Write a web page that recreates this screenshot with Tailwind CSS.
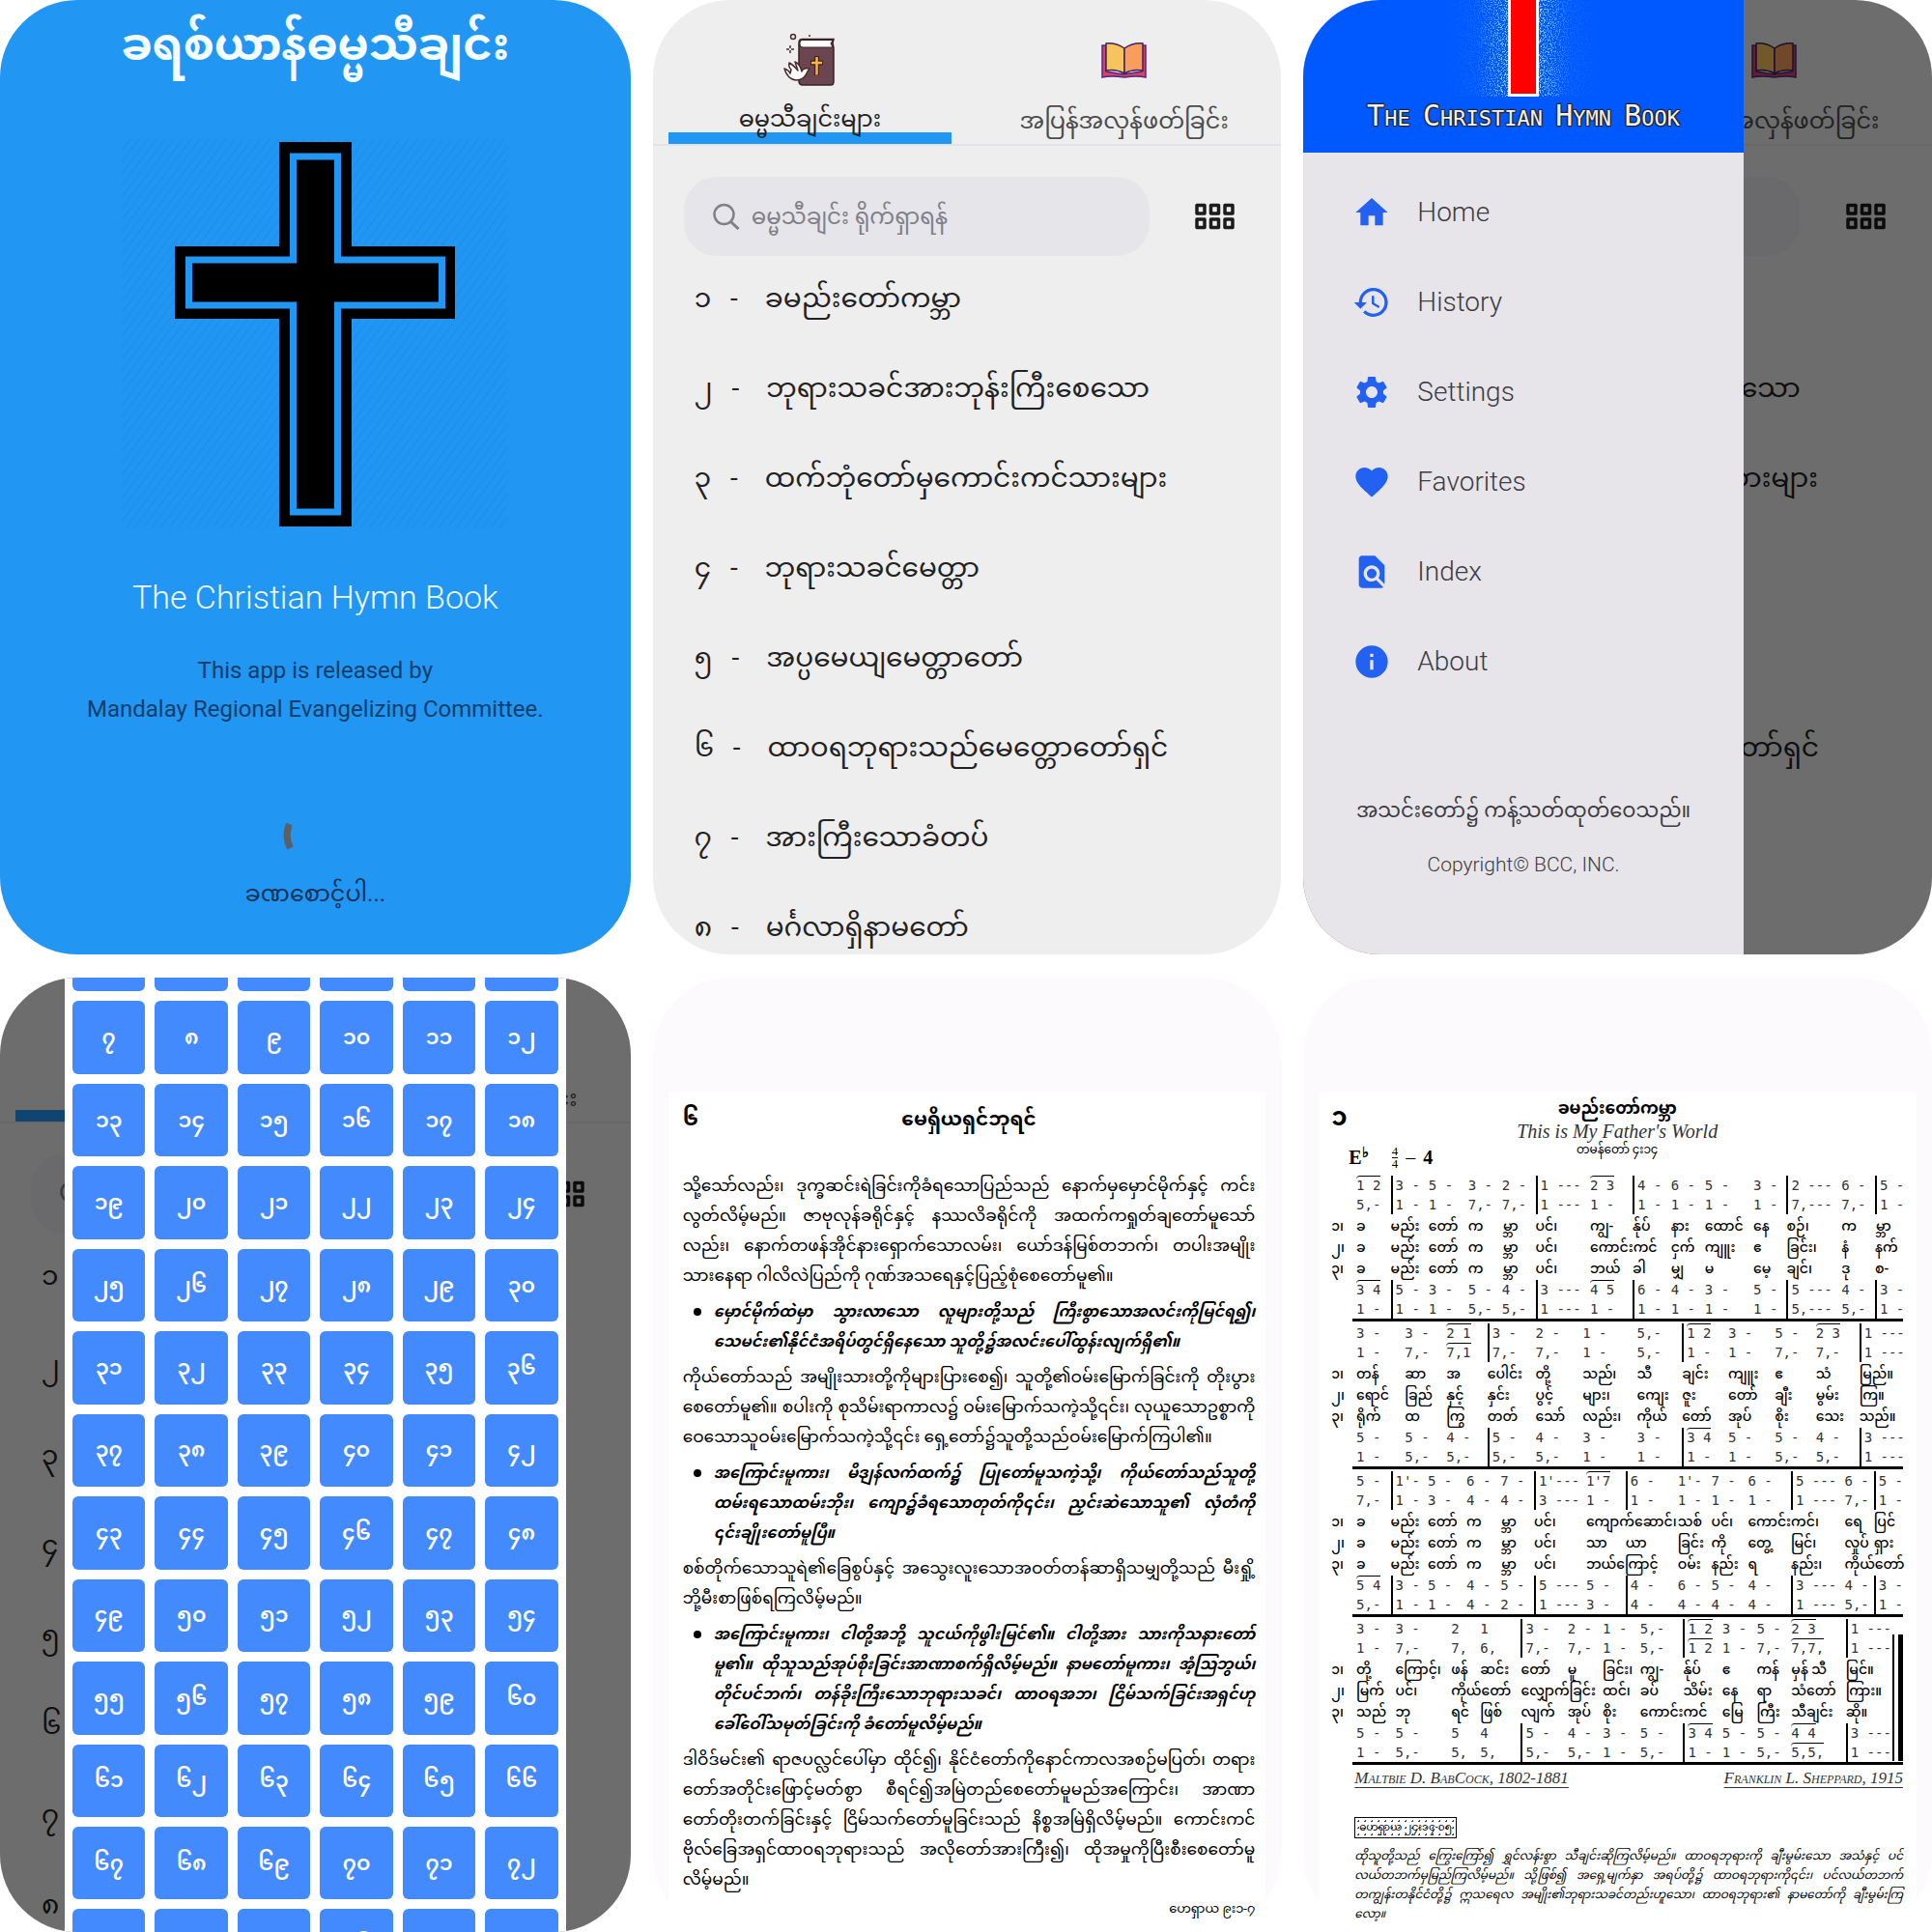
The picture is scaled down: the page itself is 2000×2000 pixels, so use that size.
<!DOCTYPE html>
<html lang="my">
<head>
<meta charset="utf-8">
<meta name="viewport" content="width=device-width, initial-scale=1">
<title>The Christian Hymn Book</title>
<script src="https://cdn.jsdelivr.net/npm/@tailwindcss/browser@4"></script>
</head>
<body class="bg-white font-['Roboto','Noto_Sans_Myanmar','Padauk','Myanmar_Text',sans-serif]">
<main class="grid min-h-screen grid-cols-[653fr_651fr_651fr] grid-rows-2 gap-x-[23px] gap-y-6">

  <!-- Splash -->
  <section class="flex flex-col items-center overflow-hidden rounded-[80px] bg-[#2196f3] text-center">
    <h1 class="mt-1.5 mb-0.5 text-[46px] leading-[80px] font-bold whitespace-nowrap text-[#f4fdff]">ခရစ်ယာန်ဓမ္မသီချင်း</h1>
    <svg class="mt-14 h-[402px] w-[400px]" viewBox="0 0 400 402" role="img" aria-label="Cross">
      <defs><pattern id="hatch" width="9" height="12" patternUnits="userSpaceOnUse"><path d="M-2 14.700L11 -2.700M-6.500 8.700L2 -2.700M7 14.700L15.500 3.300" stroke="#1b8ae4" stroke-opacity=".35" stroke-width="2"/></pattern></defs>
      <rect width="400" height="402" fill="url(#hatch)"/>
      <path d="M163 3h75v108h107v75H238v215H163V186H55V111h108z" fill="#000"/>
      <path d="M177.500 18h46v107h108v47h-108v214h-46v-214h-108v-47h108z" fill="#000" stroke="#2196f3" stroke-width="7"/>
    </svg>
    <p class="mt-12 text-[34px] leading-[48px] font-light whitespace-nowrap text-[#f0faff]">The Christian Hymn Book</p>
    <p class="mt-8 text-[24px] leading-10 text-[#123e6c]">This app is released by<br>Mandalay Regional Evangelizing Committee.</p>
    <svg class="mt-[77px] h-[70px] w-[70px]" viewBox="0 0 70 70" fill="none" role="img" aria-label="Loading"><path d="M8.500 22A30 30 0 0 0 9.500 47" stroke="#5b6066" stroke-width="7"/></svg>
    <p class="text-[24px] leading-[48px] text-[#0f3155]">ခဏစောင့်ပါ...</p>
  </section>

  <!-- Hymn list -->
  <section id="home" class="relative overflow-hidden rounded-[80px] bg-[#eeeeee] text-[#222]">
    <div class="absolute inset-0 overflow-hidden">
      <nav class="grid h-[151px] grid-cols-2 border-b-2 border-[#e3e3e7]">
        <button class="relative mx-4 flex flex-col items-center pt-[34px]">
          <svg class="h-[55px] w-[54px]" viewBox="0 0 54 55">
            <circle cx="10" cy="4" r="2.500" fill="none" stroke="#4a2a30" stroke-width="1.500"/><circle cx="27" cy="3" r="1" fill="#4a2a30"/>
            <path d="M7 13v8M3 17h8" stroke="#4a2a30" stroke-width="1.500" stroke-dasharray="3 2"/>
            <path d="M16 10q0-3.500 4-3.500h32l-1 4 1 5v35q0 3.500-3 3.500H20q-4 0-4-4z" fill="#6b4550" stroke="#3c2024" stroke-width="1.500"/>
            <path d="M17 10q0-2.500 3-2.500h31l-2 3.500 2 4H20q-3 0-3-3z" fill="#fff" stroke="#3c2024" stroke-width="1"/>
            <path d="M34.500 24v20M28 31h13" stroke="#3c2024" stroke-width="5"/><path d="M34.500 25v18.500M29 31h11" stroke="#f6b649" stroke-width="2.500"/>
            <path d="M1 37q5 2 6 5l1-4q-3-3-2-7 4 2 9 8l-3-9q5 2 7 10 1-4 8-3l-2 3q-3 9-12 9-9-1-12-12z" fill="#fff" stroke="#4a2a30" stroke-width="1.500" stroke-linejoin="round"/>
          </svg>
          <span class="absolute inset-x-0 bottom-0 h-3 bg-[#2196f3]"></span>
          <span data-under="drawer picker" class="relative mt-[14px] text-[24px] leading-10 whitespace-nowrap">ဓမ္မသီချင်းများ</span>
        </button>
        <button class="mx-4 flex flex-col items-center pt-[34px] text-[#4c4c4c]">
          <svg class="h-[55px] w-[54px]" viewBox="0 0 54 55">
            <path d="M4 13h4v27l18 3 19-3V13h4v33q-9-2-22 0-14-2-23 0z" fill="#e0405f" stroke="#4b2a8c" stroke-width="1.500"/>
            <path d="M8 11q10-1 19 5v26q-9-5-19-3z" fill="#f7c35c" stroke="#3b2360" stroke-width="1.500"/>
            <path d="M46 11q-10-1-19 5v26q9-5 19-3z" fill="#f99d5c" stroke="#3b2360" stroke-width="1.500"/>
          </svg>
          <span class="mt-4 text-[24px] leading-10 whitespace-nowrap">အပြန်အလှန်ဖတ်ခြင်း</span>
        </button>
      </nav>
      <div class="mr-12 ml-8 flex items-center justify-between pt-8">
        <label class="flex h-[82px] w-[482px] items-center gap-3 rounded-[34px] bg-[#e6e5ea] pl-[30px]">
          <svg class="h-7 w-7 shrink-0" viewBox="0 0 28 28" fill="none" stroke="#808086" stroke-width="2.500" role="img" aria-label="Search"><circle cx="11.500" cy="12" r="10"/><path d="M18.500 19.500l8 7.500" stroke-width="3"/></svg>
          <input data-under="drawer picker" type="search" class="h-14 w-80 bg-transparent text-[23px] outline-none placeholder:text-[#808086]" placeholder="ဓမ္မသီချင်း ရိုက်ရှာရန်">
        </label>
        <button aria-label="Number grid"><svg class="h-7 w-[41px]" viewBox="0 0 41 28" fill="none" stroke="#1c1c1c" stroke-width="3.500"><path d="M2 2.500h8v8.500h-8zM16.500 2.500h8v8.500h-8zM31 2.500h8v8.500h-8zM2 17h8v8.500h-8zM16.500 17h8v8.500h-8zM31 17h8v8.500h-8z" stroke-linejoin="round"/></svg></button>
      </div>
      <ol class="-mt-[3px] pl-[43px] text-[28px] leading-[93px]">
        <li class="flex gap-5 whitespace-nowrap"><span data-under="drawer">၁</span><span data-under="drawer picker">-</span><span data-under="drawer picker" class="ml-2">ခမည်းတော်ကမ္ဘာ</span></li>
        <li class="flex gap-5 whitespace-nowrap"><span data-under="drawer">၂</span><span data-under="drawer picker">-</span><span data-under="picker" class="ml-2">ဘုရားသခင်အားဘုန်းကြီးစေသော</span></li>
        <li class="flex gap-5 whitespace-nowrap"><span data-under="drawer">၃</span><span data-under="drawer picker">-</span><span data-under="picker" class="ml-2">ထက်ဘုံတော်မှကောင်းကင်သားများ</span></li>
        <li class="flex gap-5 whitespace-nowrap"><span data-under="drawer">၄</span><span data-under="drawer picker">-</span><span data-under="drawer picker" class="ml-2">ဘုရားသခင်မေတ္တာ</span></li>
        <li class="flex gap-5 whitespace-nowrap"><span data-under="drawer">၅</span><span data-under="drawer picker">-</span><span data-under="drawer picker" class="ml-2">အပ္ပမေယျမေတ္တာတော်</span></li>
        <li class="flex gap-5 whitespace-nowrap"><span data-under="drawer">၆</span><span data-under="drawer picker">-</span><span data-under="picker" class="ml-2">ထာဝရဘုရားသည်မေတ္တောတော်ရှင်</span></li>
        <li class="flex gap-5 whitespace-nowrap"><span data-under="drawer">၇</span><span data-under="drawer picker">-</span><span data-under="drawer picker" class="ml-2">အားကြီးသောခံတပ်</span></li>
        <li class="flex gap-5 whitespace-nowrap"><span data-under="drawer">၈</span><span data-under="drawer picker">-</span><span data-under="drawer picker" class="ml-2">မင်္ဂလာရှိနာမတော်</span></li>
      </ol>
    </div>
  </section>

  <!-- Drawer -->
  <section class="relative overflow-hidden rounded-[80px] bg-[#eeeeee]">
    <div data-home="drawer" class="absolute inset-0 overflow-hidden text-[#222]" inert></div>
    <div class="absolute inset-0 bg-black/54"></div>
    <aside class="absolute inset-y-0 left-0 flex w-[70%] flex-col items-center bg-[#e7e5ea] text-[#3c3c42]">
      <header class="relative flex h-[158px] w-full flex-col items-center bg-[#0059ff]">
        <svg class="h-[100px] w-40" viewBox="0 0 160 100">
          <defs>
            <filter id="speck" x="0" y="0" width="1" height="1"><feTurbulence type="fractalNoise" baseFrequency=".75" numOctaves="2" seed="4"/><feColorMatrix values="0 0 0 0 .35  0 0 0 0 .72  0 0 0 0 .75  9 0 0 0 -4.600"/></filter>
            <linearGradient id="fade"><stop offset="0" stop-color="#000"/><stop offset=".2" stop-color="#222"/><stop offset=".42" stop-color="#fff"/><stop offset=".58" stop-color="#fff"/><stop offset=".8" stop-color="#222"/><stop offset="1" stop-color="#000"/></linearGradient>
            <mask id="glow"><rect width="160" height="100" fill="url(#fade)"/></mask>
          </defs>
          <g mask="url(#glow)"><rect width="160" height="100" filter="url(#speck)"/></g>
          <rect x="64" y="-4" width="32" height="104" fill="#fff"/><rect x="67" y="-4" width="26" height="101" fill="#f00"/>
        </svg>
        <p class="font-['DejaVu_Sans_Mono',monospace] text-[22px] leading-10 whitespace-nowrap text-[#f4f1ee] uppercase [text-shadow:1px_1px_1px_#222,-1px_-1px_1px_#222,1px_-1px_1px_#222,-1px_1px_1px_#222]"><span class="text-[30px]">T</span>he <span class="text-[30px]">C</span>hristian <span class="text-[30px]">H</span>ymn <span class="text-[30px]">B</span>ook</p>
      </header>
      <nav class="flex w-full flex-col pt-[15px] pl-[51px] text-[28px] leading-[93px] font-light">
        <a href="#" class="flex items-center gap-[27px]"><svg class="size-10 fill-[#2361f2]" viewBox="0 0 24 24"><path d="M10 20v-6h4v6h5v-8h3L12 3 2 12h3v8z"/></svg>Home</a>
        <a href="#" class="flex items-center gap-[27px]"><svg class="size-10 fill-[#2361f2]" viewBox="0 0 24 24"><path d="M13 3a9 9 0 0 0-9 9H1l3.890 3.890.070.140L9 12H6c0-3.870 3.130-7 7-7s7 3.130 7 7-3.130 7-7 7c-1.930 0-3.680-.79-4.940-2.060l-1.420 1.420A8.954 8.954 0 0 0 13 21a9 9 0 0 0 0-18zm-1 5v5l4.280 2.540.72-1.210-3.500-2.080V8z"/></svg>History</a>
        <a href="#" class="flex items-center gap-[27px]"><svg class="size-10 fill-[#2361f2]" viewBox="0 0 24 24"><path d="M19.140 12.940c.04-.3.060-.61.060-.94s-.02-.64-.07-.94l2.030-1.580a.49.49 0 0 0 .12-.61l-1.920-3.320a.488.488 0 0 0-.59-.22l-2.390.96c-.5-.38-1.030-.7-1.620-.94l-.36-2.540a.484.484 0 0 0-.48-.41h-3.840c-.24 0-.43.170-.47.410l-.36 2.540c-.59.240-1.130.570-1.620.940l-2.390-.96c-.22-.08-.47 0-.59.220L2.740 8.870c-.12.210-.08.470.120.610l2.030 1.580c-.05.300-.09.630-.09.940s.02.640.070.940l-2.030 1.580a.49.49 0 0 0-.12.610l1.920 3.320c.12.220.37.290.59.220l2.390-.96c.5.380 1.030.7 1.620.94l.36 2.540c.05.240.24.410.48.410h3.840c.24 0 .44-.17.470-.41l.36-2.540c.59-.24 1.130-.56 1.620-.94l2.390.96c.22.080.47 0 .59-.22l1.920-3.320c.12-.22.070-.47-.12-.61zM12 15.600c-1.980 0-3.600-1.620-3.600-3.600s1.620-3.600 3.600-3.600 3.600 1.620 3.600 3.600-1.620 3.600-3.600 3.600z"/></svg>Settings</a>
        <a href="#" class="flex items-center gap-[27px]"><svg class="size-10 fill-[#2361f2]" viewBox="0 0 24 24"><path d="M12 21.350l-1.450-1.320C5.400 15.360 2 12.280 2 8.500 2 5.420 4.420 3 7.500 3c1.740 0 3.410.81 4.500 2.090C13.090 3.810 14.760 3 16.500 3 19.580 3 22 5.420 22 8.500c0 3.780-3.400 6.860-8.550 11.540z"/></svg>Favorites</a>
        <a href="#" class="flex items-center gap-[27px]"><svg class="size-10 fill-[#2361f2]" viewBox="0 0 24 24"><path d="M20 19.590V8l-6-6H6c-1.100 0-1.990.9-1.990 2L4 20c0 1.100.89 2 1.990 2H18c.45 0 .85-.15 1.190-.4l-4.430-4.430c-.8.520-1.740.83-2.760.83-2.760 0-5-2.240-5-5s2.240-5 5-5 5 2.240 5 5c0 1.020-.31 1.960-.83 2.750zM9 13c0 1.660 1.340 3 3 3s3-1.340 3-3-1.340-3-3-3-3 1.340-3 3z"/></svg>Index</a>
        <a href="#" class="flex items-center gap-[27px]"><svg class="size-10 fill-[#2361f2]" viewBox="0 0 24 24"><path d="M12 2a10 10 0 1 0 0 20 10 10 0 0 0 0-20zm1 15h-2v-6h2zm0-8h-2V7h2z"/></svg>About</a>
      </nav>
      <p class="mt-[78px] text-[21px] leading-[60px] whitespace-nowrap">အသင်းတော်၌ ကန့်သတ်ထုတ်ဝေသည်။</p>
      <p class="text-[21px] leading-[52px] font-light">Copyright© BCC, INC.</p>
    </aside>
  </section>

  <!-- Number picker -->
  <section class="relative overflow-hidden rounded-[80px] bg-[#eeeeee]">
    <div data-home="picker" class="absolute inset-0 overflow-hidden text-[#222]" inert></div>
    <div class="absolute inset-0 bg-black/54"></div>
    <div role="dialog" aria-label="Hymn numbers" class="absolute inset-y-0 right-[67px] left-[67px] overflow-hidden bg-white px-2">
      <div id="numbers" class="-mt-[61px] grid grid-cols-6 gap-[10px]"></div>
    </div>
  </section>

  <!-- Responsive reading -->
  <section class="flex flex-col overflow-hidden rounded-[80px] bg-[#fdfafe] px-4 pt-[118px] text-black">
    <article class="flex-1 bg-white pr-[11px] pl-[15px] text-[17px] leading-[31px]">
      <header class="grid grid-cols-[1fr_auto_1fr] text-[20px] leading-[56px] font-bold"><span class="text-[22px]">၆</span><h2>မေရှိယရှင်ဘုရင်</h2></header>
      <div id="reading" class="mt-[26px] flex flex-col gap-[6px]"></div>
      <p class="text-right text-[13px] leading-[30px]">ဟေရှာယ ၉း၁-၇</p>
    </article>
  </section>

  <!-- Hymn sheet -->
  <section class="flex flex-col overflow-hidden rounded-[80px] bg-[#fdfafe] px-4 pt-[118px] text-black">
    <article class="flex-1 bg-white pr-[14px] pl-[13px]">
      <header class="grid grid-cols-[1fr_auto_1fr]">
        <span class="text-[26px] leading-[52px] font-bold">၁</span>
        <div class="text-center">
          <h2 class="text-[17px] leading-[34px] font-bold">ခမည်းတော်ကမ္ဘာ</h2>
          <p class="font-['Liberation_Serif',serif] text-[20px] leading-[14px] text-[#333] italic">This is My Father's World</p>
          <p class="text-[12px] leading-6">တမန်တော် ၄း၁၄</p>
        </div>
      </header>
      <div class="-mt-[22px] flex h-9 items-center pl-[18px] font-['Liberation_Serif',serif] text-[20px]">
        <b>E<sup>♭</sup></b>
        <span class="mr-2 ml-6 flex flex-col text-[13px] leading-3"><span class="border-b border-black">4</span><span>4</span></span>– <b class="ml-2">4</b>
      </div>
      <div id="score" class="mt-px flex flex-col gap-[2px]"></div>
      <div class="flex justify-between pl-6 font-['Liberation_Serif',serif] text-[17px] leading-7 text-[#333] italic underline underline-offset-4 [font-variant-caps:small-caps]"><span>Maltbie D. BabCock, 1802-1881</span><span>Franklin L. Sheppard, 1915</span></div>
      <p class="mt-[26px] ml-6 w-fit border border-black bg-[radial-gradient(#444_1px,transparent_1px)] bg-size-[7px_7px] px-1 text-[11px] leading-5">ဟေရှာယ ၂၄း၁၄-၁၅</p>
      <div id="verse" class="mt-2 ml-6 text-[12px] leading-5 italic"></div>
    </article>
  </section>
</main>

<script>
  const digits = n => String(n).replace(/\d/g, d => '၀၁၂၃၄၅၆၇၈၉'[d]);
  // The first row is scrolled almost out of sight, so it carries its number as a label only.
  document.getElementById('numbers').innerHTML = Array.from({ length: 78 }, (_, i) =>
    `<button aria-label="${digits(i + 1)}" class="aspect-square rounded-md bg-[#448aff] text-[22px] leading-none font-semibold text-white">${i < 6 ? '' : digits(i + 1)}</button>`).join('');

  // Full lines are justified; the last line of each block is not.
  const lines = a => a.map((t, i) => `<span class="block whitespace-nowrap ${i < a.length - 1 ? '[text-align-last:justify]' : ''}">${t}</span>`).join('');
  const reading = [
    [0, ['သို့သော်လည်း၊ ဒုက္ခဆင်းရဲခြင်းကိုခံရသောပြည်သည် နောက်မှမှောင်မိုက်နှင့် ကင်း', 'လွတ်လိမ့်မည်။ ဇာဗုလုန်ခရိုင်နှင့် နဿလိခရိုင်ကို အထက်ကရှုတ်ချတော်မူသော်', 'လည်း၊ နောက်တဖန်အိုင်နားရှောက်သောလမ်း၊ ယော်ဒန်မြစ်တဘက်၊ တပါးအမျိုး', 'သားနေရာ ဂါလိလဲပြည်ကို ဂုဏ်အသရေနှင့်ပြည့်စုံစေတော်မူ၏။']],
    [1, ['မှောင်မိုက်ထဲမှာ သွားလာသော လူများတို့သည် ကြီးစွာသောအလင်းကိုမြင်ရ၍၊', 'သေမင်း၏နိုင်ငံအရိပ်တွင်ရှိနေသော သူတို့၌အလင်းပေါ်ထွန်းလျက်ရှိ၏။']],
    [0, ['ကိုယ်တော်သည် အမျိုးသားတို့ကိုများပြားစေ၍၊ သူတို့၏ဝမ်းမြောက်ခြင်းကို တိုးပွား', 'စေတော်မူ၏။ စပါးကို စုသိမ်းရာကာလ၌ ဝမ်းမြောက်သကဲ့သို့၎င်း၊ လုယူသောဥစ္စာကို', 'ဝေသောသူဝမ်းမြောက်သကဲ့သို့၎င်း ရှေ့တော်၌သူတို့သည်ဝမ်းမြောက်ကြပါ၏။']],
    [1, ['အကြောင်းမူကား၊ မိဒျန်လက်ထက်၌ ပြုတော်မူသကဲ့သို့၊ ကိုယ်တော်သည်သူတို့', 'ထမ်းရသောထမ်းဘိုး၊ ကျော၌ခံရသောတုတ်ကို၎င်း၊ ညှင်းဆဲသောသူ၏ လှံတံကို', '၎င်းချိုးတော်မူပြီ။']],
    [0, ['စစ်တိုက်သောသူရဲ၏ခြေစွပ်နှင့် အသွေးလူးသောအဝတ်တန်ဆာရှိသမျှတို့သည် မီးရှို့', 'ဘို့မီးစာဖြစ်ရကြလိမ့်မည်။']],
    [1, ['အကြောင်းမူကား၊ ငါတို့အဘို့ သူငယ်ကိုဖွါးမြင်၏။ ငါတို့အား သားကိုသနားတော်', 'မူ၏။ ထိုသူသည်အုပ်စိုးခြင်းအာဏာစက်ရှိလိမ့်မည်။ နာမတော်မူကား၊ အံ့ဩဘွယ်၊', 'တိုင်ပင်ဘက်၊ တန်ခိုးကြီးသောဘုရားသခင်၊ ထာဝရအဘ၊ ငြိမ်သက်ခြင်းအရှင်ဟု', 'ခေါ်ဝေါ်သမုတ်ခြင်းကို ခံတော်မူလိမ့်မည်။']],
    [0, ['ဒါဝိဒ်မင်း၏ ရာဇပလ္လင်ပေါ်မှာ ထိုင်၍၊ နိုင်ငံတော်ကိုနောင်ကာလအစဉ်မပြတ်၊ တရား', 'တော်အတိုင်းဖြောင့်မတ်စွာ စီရင်၍အမြဲတည်စေတော်မူမည်အကြောင်း၊ အာဏာ', 'တော်တိုးတက်ခြင်းနှင့် ငြိမ်သက်တော်မူခြင်းသည် နိစ္စအမြဲရှိလိမ့်မည်။ ကောင်းကင်', 'ဗိုလ်ခြေအရှင်ထာဝရဘုရားသည် အလိုတော်အားကြီး၍၊ ထိုအမှုကိုပြီးစီးစေတော်မူ', 'လိမ့်မည်။']],
  ];
  document.getElementById('reading').innerHTML = reading.map(([answer, a]) => answer
    ? `<div class="flex text-[16px] font-bold italic"><span class="mt-3 mr-[13px] ml-[11px] size-2 shrink-0 rounded-full bg-black"></span><p class="flex-1">${lines(a)}</p></div>`
    : `<p>${lines(a)}</p>`).join('');

  document.getElementById('verse').innerHTML = lines(['ထိုသူတို့သည် ကြွေးကြော်၍ ရွှင်လန်းစွာ သီချင်းဆိုကြလိမ့်မည်။ ထာဝရဘုရားကို ချီးမွမ်းသော အသံနှင့် ပင်', 'လယ်တဘက်မှမြည်ကြလိမ့်မည်။ သို့ဖြစ်၍ အရှေ့မျက်နှာ အရပ်တို့၌ ထာဝရဘုရားကို၎င်း၊ ပင်လယ်တဘက်', 'တကျွန်းတနိုင်ငံတို့၌ ဣသရေလ အမျိုး၏ဘုရားသခင်တည်းဟူသော၊ ထာဝရဘုရား၏ နာမတော်ကို ချီးမွမ်းကြ', 'လော့။']);

  // Each system: column starts, the columns that open a bar, two upper voices, three verses, two lower voices.
  // Square brackets mark a slur.
  const score = [
    { at: [108,195,291,391,477,562,700,808,905,991,1114,1198,1337,1422], bars: [1,5,7,11,13],
      up: ['[1 2]|3 -|5 -|3 -|2 -|1 ---|[2 3]|4 -|6 -|5 -|3 -|2 ---|6 -|5 -', '5,-|1 -|1 -|7,-|7,-|1 ---|1 -|1 -|1 -|1 -|1 -|7,---|7,-|1 -'],
      words: ['ခ|မည်း|တော်|က|မ္ဘာ|ပင်၊|ကျွ-|န်ုပ်|နား|ထောင်|နေ|စဉ်၊|က|မ္ဘာ', 'ခ|မည်း|တော်|က|မ္ဘာ|ပင်၊|ကောင်းကင်||ငှက်|ကျူး|ဧ|ခြင်း၊|နံ|နက်', 'ခ|မည်း|တော်|က|မ္ဘာ|ပင်၊|ဘယ်|ခါ|မျှ|မ|မေ့|ချင်၊|ဒု|စ-'],
      low: ['[3 4]|5 -|3 -|5 -|4 -|3 ---|[4 5]|6 -|4 -|3 -|5 -|5 ---|4 -|3 -', '1 -|1 -|1 -|5,-|5,-|1 ---|1 -|1 -|1 -|1 -|1 -|5,---|5,-|1 -'] },
    { at: [108,231,336,440,562,681,819,933,1050,1168,1272,1382], bars: [3,7,11],
      up: ['3 -|3 -|[2 1]|3 -|2 -|1 -|5,-|[1 2]|3 -|5 -|[2 3]|1 ---', '1 -|7,-|[7,1]|7,-|7,-|1 -|5,-|1 -|1 -|7,-|7,-|1 ---'],
      words: ['တန်|ဆာ|အ|ပေါင်း|တို့|သည်၊|သီ|ချင်း|ကျူး|ဧ|သံ|မြည်။', 'ရောင်|ခြည်|နှင့်|နှင်း|ပွင့်|များ၊|ကျေး|ဇူး|တော်|ချီး|မွမ်း|ကြ။', 'ရိုက်|ထ|ကြွ|တတ်|သော်|လည်း၊|ကိုယ်|တော်|အုပ်|စိုး|သေး|သည်။'],
      low: ['5 -|5 -|4 -|5 -|4 -|3 -|3 -|[3 4]|5 -|5 -|4 -|3 ---', '1 -|5,-|5,-|5,-|5,-|1 -|1 -|1 -|1 -|5,-|5,-|1 ---'] },
    { at: [108,195,289,387,473,558,690,790,922,1007,1100,1209,1345,1419], bars: [1,5,7,11,13],
      up: ["5 -|1'-|5 -|6 -|7 -|1'---|[1'7]|6 -|1'-|7 -|6 -|5 ---|6 -|5 -", '7,-|1 -|3 -|4 -|4 -|3 ---|1 -|1 -|1 -|1 -|1 -|1 ---|7,-|1 -'],
      words: ['ခ|မည်း|တော်|က|မ္ဘာ|ပင်၊|ကျောက်ဆောင်၊||သစ်|ပင်၊|ကောင်းကင်၊||ရေ|ပြင်', 'ခ|မည်း|တော်|က|မ္ဘာ|ပင်၊|သာ|ယာ|ခြင်း|ကို|တွေ့|မြင်၊|လှုပ်|ရှား', 'ခ|မည်း|တော်|က|မ္ဘာ|ပင်၊|ဘယ်ကြောင့်||ဝမ်း|နည်း|ရ|နည်း၊|ကိုယ်တော်|'],
      low: ['[5 4]|3 -|5 -|4 -|5 -|5 ---|5 -|4 -|6 -|5 -|4 -|3 ---|4 -|3 -', '5,-|1 -|1 -|4 -|2 -|1 ---|3 -|4 -|4 -|4 -|4 -|1 ---|5,-|1 -'] },
    { at: [108,207,348,422,525,643,732,827,936,1035,1122,1210,1348], bars: [4,8,12], end: true,
      up: ['3 -|3 -|2|1|3 -|2 -|1 -|5,-|[1 2]|3 -|5 -|[2 3]|1 ---', '1 -|7,-|7,|6,|7,-|7,-|1 -|5,-|[1 2]|1 -|7,-|[7,7,]|1 ---'],
      words: ['တို့|ကြောင့်၊|ဖန်|ဆင်း|တော်|မူ|ခြင်း၊|ကျွ-|န်ုပ်|ဧ|ကန်|မှန် သီ|မြင်။', 'မြက်|ပင်၊|ကိုယ်တော်||လျှောက်ခြင်း||ထင်၊|ခပ်|သိမ်း|နေ|ရာ|သံတော်|ကြား။', 'သည်|ဘု|ရင်|ဖြစ်|လျက်|အုပ်|စိုး|ကောင်းကင်||မြေ|ကြီး|သီချင်း|ဆို။'],
      low: ['5 -|5 -|5|4|5 -|4 -|3 -|5 -|[3 4]|5 -|5 -|[4 4]|3 ---', '1 -|5,-|5,|5,|5,-|5,-|1 -|5,-|1 -|1 -|5,-|[5,5,]|1 ---'] },
  ];
  document.getElementById('score').innerHTML = score.map(s => {
    const starts = [45, ...s.at, 1493];
    const cols = starts.slice(1).map((x, i) => `minmax(0,${x - starts[i]}fr)`).join(' ');
    const notes = row => `<div class="grid font-['DejaVu_Sans_Mono',monospace] text-[14px] leading-5 whitespace-pre text-[#333]" style="grid-template-columns:${cols}"><span></span>${row.split('|').map((n, i) =>
      `<span class="${s.bars.includes(i) ? 'border-l-2 border-black pl-[3px]' : ''}">${n[0] === '[' ? `<span class="inline-block h-4 rounded-tl-sm border-t border-black leading-[18px]">${n.slice(1, -1)}</span>` : n}</span>`).join('')}</div>`;
    const words = (row, i) => `<div class="grid text-[14px] leading-[22px] font-medium whitespace-nowrap" style="grid-template-columns:${cols}"><span>${digits(i + 1)}၊</span>${row.split('|').map(w => `<span>${w}</span>`).join('')}</div>`;
    return `<div class="relative">${s.up.map(notes).join('')}<div class="py-px">${s.words.map(words).join('')}</div>${s.low.map(notes).join('')}
      ${s.end ? '<span class="absolute top-4 right-0 bottom-1 w-[11px] border-r-[5px] border-l-2 border-black"></span>' : ''}<div class="ml-[22px] h-[3px] bg-black"></div></div>`;
  }).join('');

  // The drawer and the picker open over the hymn list; texts wholly under them are not painted.
  document.querySelectorAll('[data-home]').forEach(el => {
    el.append(document.querySelector('#home > div').cloneNode(true));
    el.querySelectorAll(`[data-under~="${el.dataset.home}"]`).forEach(t => t.classList.add('invisible'));
  });
</script>
</body>
</html>
